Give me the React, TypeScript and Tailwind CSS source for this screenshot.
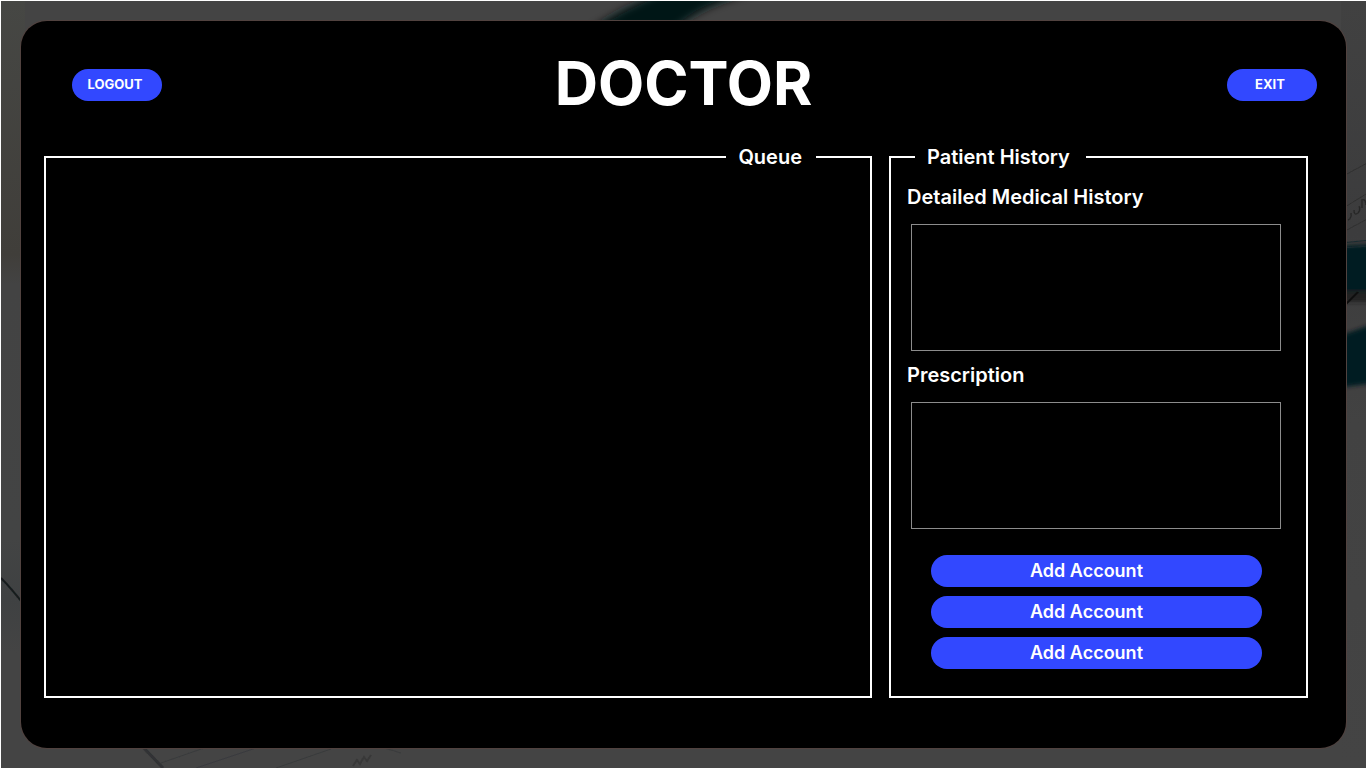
import type { ReactNode } from "react";

function Backdrop() {
  return (
    <svg
      aria-hidden="true"
      className="absolute inset-0 h-full w-full"
      viewBox="0 0 1365 767"
      preserveAspectRatio="none"
    >
      <defs>
        <filter id="soft" x="-10%" y="-30%" width="120%" height="160%">
          <feGaussianBlur stdDeviation="4" />
        </filter>
        <filter id="edge" x="-60%" y="-20%" width="220%" height="140%">
          <feGaussianBlur stdDeviation="2" />
        </filter>
        <filter id="slight">
          <feGaussianBlur stdDeviation="0.6" />
        </filter>
        <linearGradient id="warm" x1="0" y1="0" x2="0" y2="1">
          <stop offset="0" stopColor="#464744" />
          <stop offset="0.33" stopColor="#403e3a" />
          <stop offset="0.37" stopColor="#434343" />
          <stop offset="0.7" stopColor="#434444" />
          <stop offset="0.78" stopColor="#3f4142" />
          <stop offset="0.85" stopColor="#444444" />
        </linearGradient>
        <linearGradient id="right" x1="0" y1="0" x2="0" y2="1">
          <stop offset="0" stopColor="#414141" />
          <stop offset="0.3" stopColor="#3c3c3d" />
          <stop offset="0.55" stopColor="#424242" />
          <stop offset="1" stopColor="#444444" />
        </linearGradient>
      </defs>
      <rect width="1365" height="767" fill="#444444" />
      <rect width="24" height="767" fill="url(#warm)" />
      <rect x="1340" width="25" height="767" fill="url(#right)" />
      <path d="M590 28 Q625 5 660 -8 L752 -8 Q702 3 674 28 Z" fill="#021519" filter="url(#soft)" />
      <g filter="url(#edge)">
        <path d="M1335 245 L1375 243 V294 L1335 290 Z" fill="#021b20" />
        <path d="M1335 290 H1375 V301 H1335 Z" fill="#202222" />
        <path d="M1335 336 L1375 322 V382 L1335 387 Z" fill="#021b20" />
      </g>
      <g filter="url(#slight)">
        <path d="M1340 242 L1370 239 M1340 247 L1370 245" stroke="#1a2c31" strokeWidth="1" />
        <path d="M1344 304 L1357 291" stroke="#111111" strokeWidth="2" />
        <path
          d="M1344 174 L1370 160 M1344 206 L1370 190 M1344 230 L1370 216"
          stroke="#303030"
          strokeWidth="1"
        />
        <path
          d="M1347 219 q4 -2 3 -7 M1353 209 q0 6 4 3 q3 -3 1 -7 M1361 207 v-8 q4 -1 4 5"
          stroke="#282828"
          strokeWidth="1.5"
          fill="none"
        />
        <path d="M0 577 Q10 587 24 605" stroke="#171c1e" strokeWidth="2" fill="none" />
        <path d="M140 744 L162 767" stroke="#303234" strokeWidth="3" />
        <path
          d="M160 762 L206 746 M195 767 L258 746 M275 767 L330 748 M380 746 L400 752"
          stroke="#393b3c"
          strokeWidth="1"
        />
        <path d="M352 765 l4 -6 3 4 4 -7 3 4 4 -6" stroke="#383838" strokeWidth="2" fill="none" />
      </g>
    </svg>
  );
}

const pill = "h-8 cursor-pointer rounded-full bg-[#3248ff] text-white hover:bg-[#4a5dff]";

function Group({
  title,
  legendClass,
  children,
}: {
  title: string;
  legendClass: string;
  children?: ReactNode;
}) {
  return (
    <fieldset className="min-w-0 border-2 border-white">
      <legend className={`text-xl leading-6 font-semibold ${legendClass}`}>{title}</legend>
      {children}
    </fieldset>
  );
}

function Notes({ id, label }: { id: string; label: string }) {
  return (
    <div className="flex flex-col gap-[15px]">
      <label htmlFor={id} className="text-xl leading-6 font-semibold">
        {label}
      </label>
      <div className="flex pr-[25px] pl-1">
        <textarea
          id={id}
          className="h-[127px] w-full resize-none border border-[#8c8c8c] bg-black p-2 text-sm text-white outline-none focus:border-white"
        />
      </div>
    </div>
  );
}

export default function App() {
  return (
    <div className="relative flex min-h-screen flex-col border-t border-l border-white bg-[#444444] font-['Inter','Liberation_Sans',sans-serif] text-white">
      <Backdrop />
      <main className="relative m-5 flex flex-1 flex-col rounded-[26px] bg-black pb-[50px] shadow-[0_0_0_1px_#51423f]">
        <header className="mt-10 mb-9 grid grid-cols-[1fr_auto_1fr] items-center px-[29px]">
          <button
            type="button"
            className={`${pill} ml-[22px] w-[90px] pr-1 text-[13px] font-bold`}
          >
            LOGOUT
          </button>
          <h1 className="pb-1 text-[60px] leading-11 font-bold">DOCTOR</h1>
          <button
            type="button"
            className={`${pill} w-[90px] justify-self-end pr-1 text-[13px] font-bold`}
          >
            EXIT
          </button>
        </header>

        <div className="grid flex-1 grid-cols-[828fr_419fr] gap-[17px] pr-[38px] pl-[23px]">
          <Group title="Queue" legendClass="mr-[54px] ml-auto pr-3.5 pl-3" />
          <Group title="Patient History" legendClass="ml-6 pr-4 pl-3">
            <form className="flex flex-col gap-3 pt-4 pl-4" onSubmit={(e) => e.preventDefault()}>
              <Notes id="medical-history" label="Detailed Medical History" />
              <Notes id="prescription" label="Prescription" />
              <div className="mt-3.5 mr-11 mb-6 ml-6 flex flex-col gap-[9px]">
                <button type="button" className={`${pill} pr-5 text-lg font-semibold`}>
                  Add Account
                </button>
                <button type="button" className={`${pill} pr-5 text-lg font-semibold`}>
                  Add Account
                </button>
                <button type="button" className={`${pill} pr-5 text-lg font-semibold`}>
                  Add Account
                </button>
              </div>
            </form>
          </Group>
        </div>
      </main>
    </div>
  );
}
